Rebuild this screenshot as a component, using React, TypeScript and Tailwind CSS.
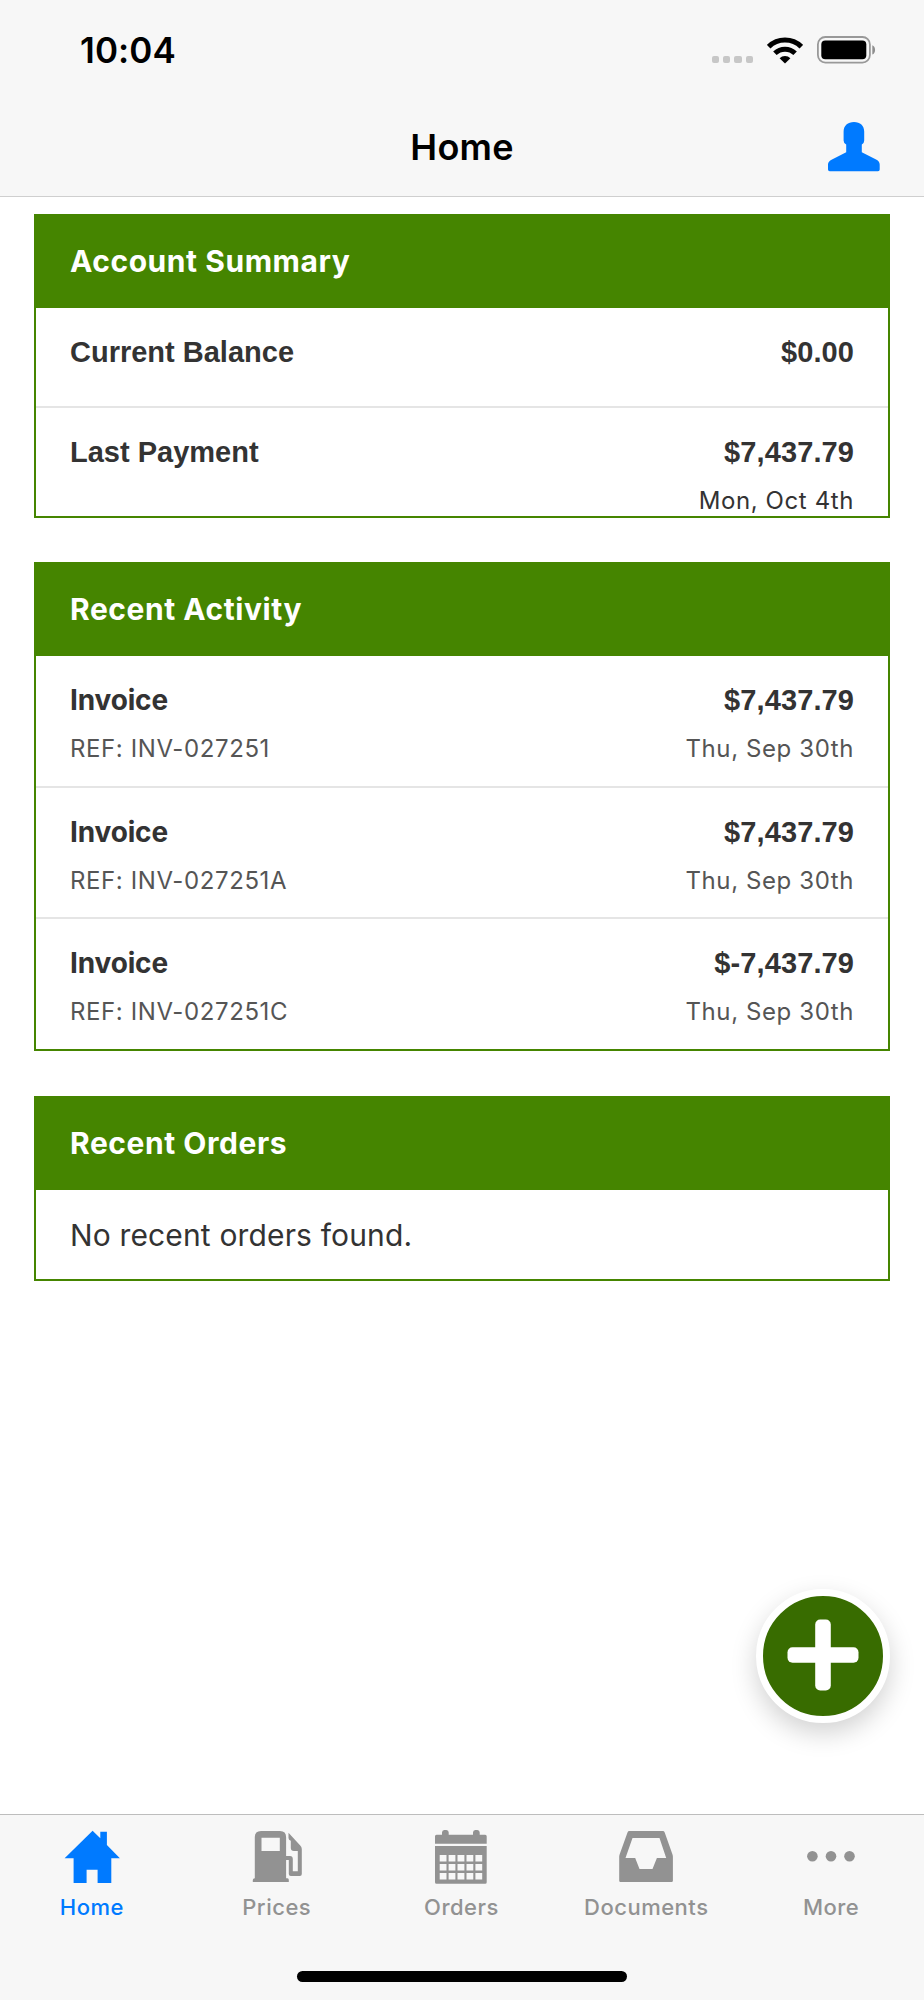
import type { ReactNode } from 'react'

const activity = [
  { title: 'Invoice', reference: 'REF: INV-027251', amount: '$7,437.79', date: 'Thu, Sep 30th' },
  { title: 'Invoice', reference: 'REF: INV-027251A', amount: '$7,437.79', date: 'Thu, Sep 30th' },
  { title: 'Invoice', reference: 'REF: INV-027251C', amount: '$-7,437.79', date: 'Thu, Sep 30th' },
]

function WifiIcon() {
  return (
    <svg width="36" height="27" viewBox="0 0 36 27" fill="none" stroke="#000" strokeWidth="5">
      <path d="M1.7 9.7A23.4 23.4 0 0 1 34.3 9.7" />
      <path d="M7.9 16.2A14.6 14.6 0 0 1 28.1 16.2" />
      <path d="M18 26.6L12.6 21.2A7.7 7.7 0 0 1 23.4 21.2Z" fill="#000" stroke="none" />
    </svg>
  )
}

function BatteryIcon() {
  return (
    <svg width="59" height="28" viewBox="0 0 59 28">
      <rect x="0.9" y="1" width="52" height="25.6" rx="7.5" fill="none" stroke="#999" strokeWidth="1.8" />
      <rect x="4.3" y="4.6" width="45" height="18.6" rx="4" fill="#000" />
      <path d="M55.3 9.2C59 10.5 59 17.3 55.3 18.6Z" fill="#8e8e8e" />
    </svg>
  )
}

function PersonIcon() {
  return (
    <svg width="52" height="50" viewBox="0 0 52 50" fill="#007aff">
      <path d="M26 0C32.2 0 36.2 3.8 36.2 9.5V18.5Q36.2 21.4 33.8 22.4V30.2L47.6 37.2C50.4 38.7 51.7 40 51.7 42.6V47.6Q51.7 49.3 50 49.3H1.7Q0 49.3 0 47.6V42.6C0 40.2 1.3 38.9 4 37.5L18.2 30.2V22.4Q15.6 21.4 15.6 18.5V9.5C15.6 3.8 19.8 0 26 0Z" />
    </svg>
  )
}

function HomeIcon() {
  return (
    <svg width="56" height="56" viewBox="0 0 56 56" fill="currentColor">
      <path d="M28.6 2.8L36.3 10.3V3.8H42.9V17L55.9 30.3H47.3V54.9H33.6V41.7H22.6V54.9H9.6V30.3H0.6Z" />
    </svg>
  )
}

function PumpIcon() {
  return (
    <svg width="56" height="56" viewBox="0 0 56 56" fill="currentColor">
      <path
        fillRule="evenodd"
        d="M12 3H31Q37.1 3 37.1 9V28H41Q43.8 28 43.8 31V43.3H48.8V23H45Q41.8 23 41.8 20V12.7Q39.5 12 39.5 10V4.7L51 17.2Q52.8 19 52.8 21V46Q52.8 48 50.8 48H41.8Q39.8 48 39.8 46V32H37.1V50.3H38.5Q39.8 50.3 39.8 52V54H3.8V52Q3.8 50.3 5.8 50.3V9Q5.8 3 12 3ZM12.5 9.8V23H30.8V9.8Z"
      />
    </svg>
  )
}

function CalendarIcon() {
  return (
    <svg width="56" height="56" viewBox="0 0 56 56" fill="currentColor">
      <path d="M2.5 6.7H8V4.5Q8 2 10.3 2H12.4Q14.7 2 14.7 4.5V6.7H39V4.5Q39 2 41.3 2H43.4Q45.7 2 45.7 4.5V6.7H51.2Q52.7 6.7 52.7 8.2V15.8H1V8.2Q1 6.7 2.5 6.7Z" />
      <path
        fillRule="evenodd"
        d="M1 18H52.7V54.2Q52.7 55.7 51.2 55.7H2.5Q1 55.7 1 54.2ZM5.7 27V33.5H12.5V27ZM14.6 27V33.5H21.4V27ZM23.5 27V33.5H30.4V27ZM32.5 27V33.5H39.3V27ZM41.4 27V33.5H48.2V27ZM5.7 36V42.5H12.5V36ZM14.6 36V42.5H21.4V36ZM23.5 36V42.5H30.4V36ZM32.5 36V42.5H39.3V36ZM41.4 36V42.5H48.2V36ZM5.7 44.9V51.6H12.5V44.9ZM14.6 44.9V51.6H21.4V44.9ZM23.5 44.9V51.6H30.4V44.9ZM32.5 44.9V51.6H39.3V44.9ZM41.4 44.9V51.6H48.2V44.9Z"
      />
    </svg>
  )
}

function InboxIcon() {
  return (
    <svg width="56" height="56" viewBox="0 0 56 56" fill="currentColor">
      <path
        fillRule="evenodd"
        d="M10.4 3H43.8Q45.2 3 45.7 4.4L53.5 26.5Q53.9 27.6 53.9 29V52.7Q53.9 54.1 52.5 54.1H1.6Q0.2 54.1 0.2 52.7V29Q0.2 27.6 0.6 26.5L8.5 4.4Q9 3 10.4 3ZM13.5 9.9L6.5 30H16.2L20.5 41H33.5L37.9 30H47.2L40.5 9.9Z"
      />
    </svg>
  )
}

function MoreIcon() {
  return (
    <svg width="56" height="56" viewBox="0 0 56 56" fill="currentColor">
      <circle cx="8.4" cy="28.3" r="5.3" />
      <circle cx="27" cy="28.3" r="5.3" />
      <circle cx="45.5" cy="28.3" r="5.3" />
    </svg>
  )
}

function Card({ title, className, children }: { title: string; className: string; children: ReactNode }) {
  return (
    <section className={`border-2 border-[#458500] bg-white ${className}`}>
      <h2 className="-mt-0.5 flex h-[94px] items-center bg-[#458500] pl-[34px] text-[30px] font-bold tracking-[0.55px] text-white">
        {title}
      </h2>
      {children}
    </section>
  )
}

function Row({
  left,
  right,
  leftNote,
  rightNote,
  className,
}: {
  left: string
  right: string
  leftNote?: string
  rightNote?: string
  className: string
}) {
  const titleFont = leftNote
    ? 'text-[28px] tracking-[-0.15px]'
    : "text-[29px] font-['Liberation_Sans',sans-serif]"

  return (
    <div className={`flex justify-between px-[34px] pt-6 leading-10 ${className}`}>
      <div>
        <p className={`font-bold text-[#333] ${titleFont}`}>{left}</p>
        {leftNote && <p className="mt-[9px] text-[24px] tracking-[0.6px]">{leftNote}</p>}
      </div>
      <div className="text-right">
        <p className="font-['Liberation_Sans',sans-serif] text-[29px] font-bold tracking-[0.1px] text-[#333]">{right}</p>
        {rightNote && <p className="mt-[9px] text-[24px] tracking-[0.6px]">{rightNote}</p>}
      </div>
    </div>
  )
}

function Tab({ label, active, children }: { label: string; active?: boolean; children: ReactNode }) {
  return (
    <a className={`flex flex-1 basis-0 flex-col items-center pt-[13px] ${active ? 'text-[#007aff]' : 'text-[#929292]'}`}>
      {children}
      <span className="mt-[9px] pr-px text-[22px] leading-7 font-medium tracking-[0.5px]">{label}</span>
    </a>
  )
}

export default function App() {
  return (
    <div className="relative flex h-[2000px] w-[924px] flex-col overflow-hidden bg-white font-['Inter',sans-serif]">
      <header className="h-[197px] shrink-0 border-b border-[#cfcfcf] bg-[#f7f7f7]">
        <div className="flex h-[100px] items-center justify-between pr-12 pl-20">
          <span className="pt-px text-[35px] font-semibold tracking-[0.1px] text-black">10:04</span>
          <div className="flex items-center">
            <div className="mt-[19px] mr-3.5 flex gap-1">
              <i className="size-[7.3px] rounded-[2px] bg-[#c7c7c7]" />
              <i className="size-[7.3px] rounded-[2px] bg-[#c7c7c7]" />
              <i className="size-[7.3px] rounded-[2px] bg-[#c7c7c7]" />
              <i className="size-[7.3px] rounded-[2px] bg-[#c7c7c7]" />
            </div>
            <WifiIcon />
            <div className="ml-3.5">
              <BatteryIcon />
            </div>
          </div>
        </div>
        <div className="grid h-[94px] grid-cols-[1fr_auto_1fr] items-center pr-11">
          <h1 className="col-start-2 pl-11 text-[36px] font-semibold tracking-[0.2px] text-black">Home</h1>
          <div className="justify-self-end">
            <PersonIcon />
          </div>
        </div>
      </header>

      <main className="flex flex-1 flex-col px-[34px] pt-[17px] text-[#555]">
        <Card title="Account Summary" className="h-[304px]">
          <Row left="Current Balance" right="$0.00" className="h-[100px] border-b-2 border-[#e5e5e5]" />
          <Row left="Last Payment" right="$7,437.79" rightNote="Mon, Oct 4th" className="h-[108px] text-[#333]" />
        </Card>

        <Card title="Recent Activity" className="mt-11 h-[489px]">
          {activity.map((item) => (
            <Row
              key={item.reference}
              left={item.title}
              leftNote={item.reference}
              right={item.amount}
              rightNote={item.date}
              className="h-[131.5px] border-b-2 border-[#e5e5e5] last:h-[129px] last:border-b-0"
            />
          ))}
        </Card>

        <Card title="Recent Orders" className="mt-[45px] h-[185px]">
          <p className="flex h-[90px] items-center pl-[34px] text-[30px] tracking-[0.15px] text-[#333]">
            No recent orders found.
          </p>
        </Card>
      </main>

      <button className="absolute top-[1589px] left-[756px] flex size-[134px] items-center justify-center rounded-full border-[7px] border-white bg-[#386c00] shadow-[0_10px_26px_rgba(0,0,0,0.18)]">
        <svg width="72" height="72" viewBox="0 0 72 72" fill="#fff" className="mr-px mb-[3px]">
          <rect x="0.5" y="28.2" width="71" height="15.6" rx="5" />
          <rect x="28.2" y="0.5" width="15.6" height="71" rx="5" />
        </svg>
      </button>

      <nav className="flex h-[186px] shrink-0 flex-col border-t border-[#bdbdbd] bg-[#f7f7f7]">
        <div className="flex">
          <Tab label="Home" active>
            <HomeIcon />
          </Tab>
          <Tab label="Prices">
            <PumpIcon />
          </Tab>
          <Tab label="Orders">
            <CalendarIcon />
          </Tab>
          <Tab label="Documents">
            <InboxIcon />
          </Tab>
          <Tab label="More">
            <MoreIcon />
          </Tab>
        </div>
        <div className="mx-auto mt-auto mb-[18px] h-[11px] w-[330px] rounded-full bg-black" />
      </nav>
    </div>
  )
}
